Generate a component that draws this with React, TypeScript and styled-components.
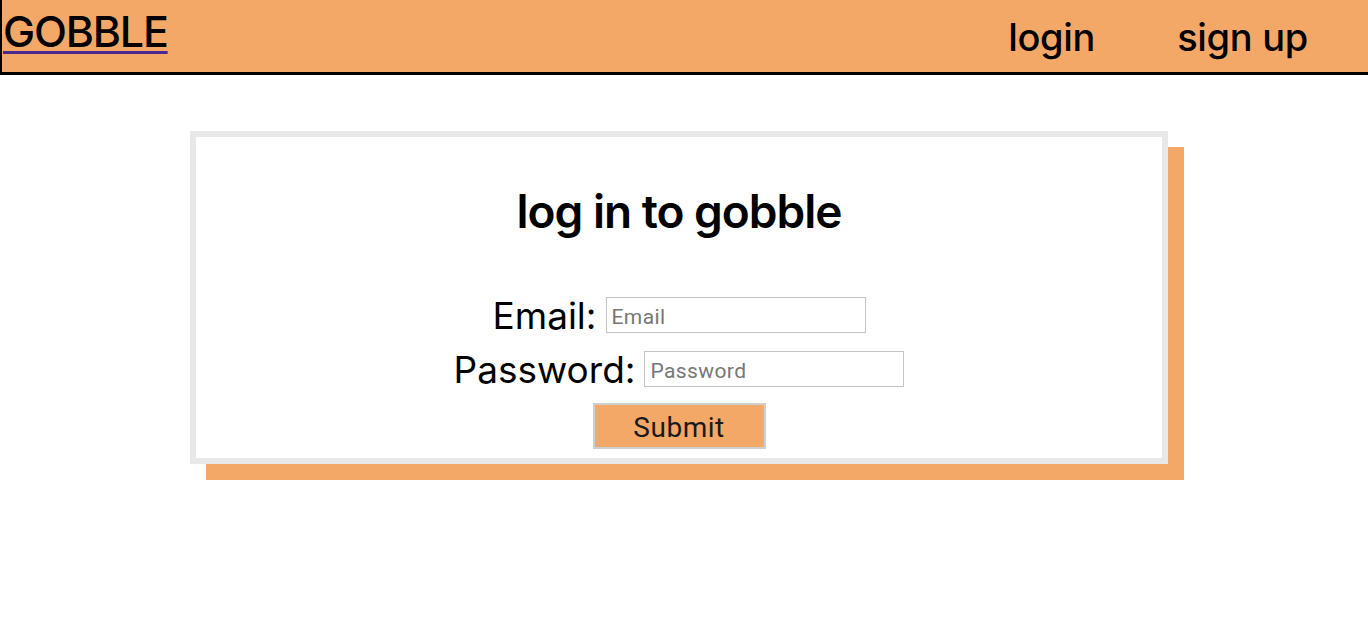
import React from "react";
import styled, { createGlobalStyle } from "styled-components";

const orange = "#f3a867";

const Global = createGlobalStyle`
  html, body { margin: 0; padding: 0; background: #fff; }
  body { font-family: Inter, "Noto Sans", sans-serif; color: #000; }
  #root { min-height: 100vh; }
  * { box-sizing: border-box; }
`;

const Page = styled.div`
  min-height: 632px;
`;

const Header = styled.header`
  height: 75px;
  background: ${orange};
  border-left: 2px solid #000;
  border-bottom: 3px solid #000;
  display: flex;
  align-items: center;
  justify-content: space-between;
  padding: 0 60px 0 1px;
`;

const Logo = styled.a`
  font-family: Inter, sans-serif;
  font-size: 43px;
  font-weight: 500;
  line-height: 52px;
  letter-spacing: -1.2px;
  color: #000;
  text-decoration: underline;
  text-decoration-color: #4b2a8f;
  text-decoration-thickness: 3px;
  text-underline-offset: 4px;
  align-self: flex-start;
  margin-top: 5px;
`;

const Nav = styled.nav`
  display: flex;
  gap: 82px;
  margin-top: 1px;
`;

const NavLink = styled.a`
  font-family: Inter, sans-serif;
  font-size: 38px;
  font-weight: 500;
  letter-spacing: -0.3px;
  color: #000;
  text-decoration: none;
`;

const Main = styled.main`
  display: flex;
  padding: 56px 0 0 190px;
`;

const Card = styled.section`
  width: 978px;
  height: 333px;
  border: 6px solid #e8e8e8;
  background: #fff;
  box-shadow: 16px 16px 0 ${orange};
  display: flex;
  flex-direction: column;
  align-items: center;
`;

const Title = styled.h1`
  margin: 46px 0 0;
  font-family: Inter, sans-serif;
  font-size: 46px;
  line-height: 56px;
  font-weight: 600;
  letter-spacing: -1px;
`;

const Form = styled.form`
  margin-top: 58px;
  display: flex;
  flex-direction: column;
  align-items: center;
  gap: 18px;
`;

const Row = styled.label`
  display: flex;
  align-items: center;
  gap: 9px;
  height: 36px;
  font-family: Inter, sans-serif;
  font-size: 37px;
  font-weight: 400;
  letter-spacing: 0px;
`;

const Input = styled.input`
  width: 260px;
  height: 36px;
  border: 1px solid #c4c4c4;
  padding: 4px 5px 0;
  font-family: Roboto, sans-serif;
  font-size: 21px;
  letter-spacing: 0.4px;
  color: #333;
  &::placeholder { color: #777; }
`;

const Submit = styled.button`
  width: 173px;
  height: 46px;
  background: ${orange};
  border: 2px solid #cfcfcf;
  font-family: Roboto, sans-serif;
  font-size: 28px;
  letter-spacing: 0.5px;
  color: #1a1a1a;
  padding: 2px 0 0;
  margin-top: -2px;
`;

export default function App() {
  return (
    <Page>
      <Global />
      <Header>
        <Logo href="#">GOBBLE</Logo>
        <Nav>
          <NavLink href="#">login</NavLink>
          <NavLink href="#">sign up</NavLink>
        </Nav>
      </Header>
      <Main>
        <Card>
          <Title>log in to gobble</Title>
          <Form onSubmit={(e) => e.preventDefault()}>
            <Row>
              Email: <Input type="email" placeholder="Email" />
            </Row>
            <Row>
              Password: <Input type="password" placeholder="Password" />
            </Row>
            <Submit type="submit">Submit</Submit>
          </Form>
        </Card>
      </Main>
    </Page>
  );
}
